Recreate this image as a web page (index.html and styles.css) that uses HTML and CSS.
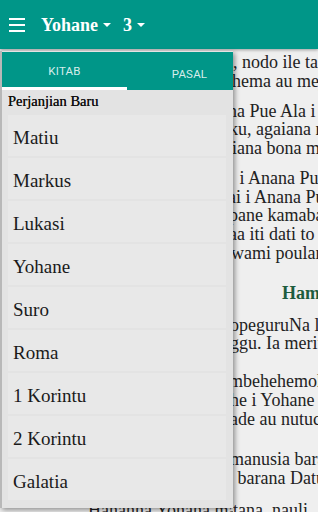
FILE: index.html
```html
<!DOCTYPE html>
<html>
<head>
<meta charset="utf-8">
<link rel="stylesheet" href="styles.css">
</head>
<body>
<header class="appbar">
  <svg class="menu-icon" width="16" height="14" viewBox="0 0 16 14"><rect x="0" y="0" width="16" height="2" fill="#fff"/><rect x="0" y="6" width="16" height="2" fill="#fff"/><rect x="0" y="12" width="16" height="2" fill="#fff"/></svg>
  <div class="picker">Yohane<span class="caret"></span></div>
  <div class="picker">3<span class="caret"></span></div>
</header>

<main class="reader">
  <p>
    <span class="ln"><span class="under c217">Yesu mampaoli pai manguli ia</span>, nodo ile tana ndaposangi</span>
    <span class="ln"><span class="under c216">Ane bara ndatulungi anu kapa</span>hema au mejaa ndaporata</span>
  </p>
  <p>
    <span class="ln"><span class="under c212">Tempo ee natuntu ngkoro, ma</span>na Pue Ala i ewa</span>
    <span class="ln"><span class="under c213">Sabana barempia rapoyaa ini</span>ku, agaiana mpakaroo</span>
    <span class="ln"><span class="under c216">Naumbaika hangko i sira, aga</span>iana bona mawo</span>
  </p>
  <p>
    <span class="ln"><span class="under c219">Sabana hangko i Pue Ala</span> i Anana Pue Ala</span>
    <span class="ln"><span class="under c212">Nuapa nawau iti mewali p</span>ai i Anana Pue Ala</span>
    <span class="ln"><span class="under c213">Hangko iti, ia hai nabaia</span>pane kamabasa</span>
    <span class="ln"><span class="under c213">Sabana hangko i Pue iti, ra</span>aa iti dati to</span>
    <span class="ln"><span class="under c215">Mewali ia to nakahamo nai</span>wami poulana</span>
  </p>
  <h2 class="title">Hampakaroo</h2>
  <p>
    <span class="ln"><span class="under c214">Ane bara manusia ndatuntu t</span>opeguruNa lau</span>
    <span class="ln"><span class="under c214">Hangko i Yohane hai i Yuda</span>ggu. Ia meriu</span>
  </p>
  <p class="gap">
    <span class="ln"><span class="under c213">Rapaantu tauna maroa me</span>mbehehemohe</span>
    <span class="ln"><span class="under c214">Napanangi hai tau ia mae</span>he i Yohane</span>
    <span class="ln"><span class="under c214">Nodo ile, tauna mabaii</span>ade au nutucu</span>
  </p>
  <p class="gap2">
    <span class="ln"><span class="under c214">Yohane manguli: Uma ara</span>manusia bara</span>
    <span class="ln"><span class="under c217">Ane uma ndawai hangko i</span> barana Datu</span>
  </p>
  <p class="last">
    <span class="ln"><span class="under c145">Hananna Yohana mangka</span>tana, nauli.</span>
  </p>
</main>

<nav class="popup">
  <div class="tabs">
    <div class="tab active">KITAB</div>
    <div class="tab">PASAL</div>
  </div>
  <div class="section">Perjanjian Baru</div>
  <ul class="books">
    <li>Matiu</li>
    <li>Markus</li>
    <li>Lukasi</li>
    <li>Yohane</li>
    <li>Suro</li>
    <li>Roma</li>
    <li>1 Korintu</li>
    <li>2 Korintu</li>
    <li>Galatia</li>
  </ul>
</nav>
</body>
</html>
```
FILE: styles.css
```css
* { box-sizing: border-box; }
html, body { margin: 0; padding: 0; }
body {
  width: 318px;
  height: 512px;
  overflow: hidden;
  background: #efefef;
  position: relative;
  font-family: "Liberation Serif", serif;
}
.appbar {
  height: 49px;
  background: #009688;
  display: flex;
  align-items: center;
  padding-left: 9px;
  box-shadow: 0 1px 3px rgba(0,0,0,0.35);
  position: relative;
  z-index: 1;
}
.menu-icon { display: block; margin-right: 16px; }
.picker {
  color: #fff;
  font-family: "Liberation Serif", serif;
  font-weight: bold;
  font-size: 18px;
  display: flex;
  align-items: center;
  margin-right: 12px;
  padding-top: 1px;
}
.caret {
  width: 0; height: 0;
  border-left: 4px solid transparent;
  border-right: 4px solid transparent;
  border-top: 4px solid #fff;
  margin-left: 5px;
  margin-top: -1px;
}
.reader {
  padding: 4px 0 0 16px;
  color: #222;
  font-size: 18px;
  line-height: 18.75px;
  white-space: nowrap;
}
.reader p { margin: 11px 0 0; }
.reader p:first-child { margin-top: 0; }
.ln { display: block; height: 18.75px; }
.under {
  display: inline-block;
  vertical-align: top;
  height: 18.75px;
  overflow: hidden;
}
.c145 { width: 145px; }
.c212 { width: 212px; }
.c213 { width: 213px; }
.c214 { width: 214px; }
.c215 { width: 215px; }
.c216 { width: 216px; }
.c217 { width: 217px; }
.c219 { width: 219px; }
.title {
  margin: 18px 0 0;
  padding-left: 266px;
  font-size: 18px;
  line-height: 24px;
  color: #1d5c3e;
  font-weight: bold;
}
.reader p.gap { margin-top: 19px; }
.reader p.gap2 { margin-top: 22px; }
.reader p.last { margin-top: 13px; padding-left: 72px; }

.popup {
  position: absolute;
  left: 0;
  top: 51px;
  width: 233px;
  height: 457px;
  background: #e3e3e3;
  border-left: 2px solid #b8b8b8;
  box-shadow: 2px 2px 5px rgba(0,0,0,0.4);
  overflow: hidden;
  z-index: 2;
}
.tabs {
  height: 38px;
  margin-top: 1px;
  background: #009688;
  display: flex;
  width: 250px;
}
.tab {
  width: 125px;
  flex: none;
  display: flex;
  align-items: center;
  justify-content: center;
  padding-top: 6px;
  color: rgba(255,255,255,0.85);
  font-family: Roboto, sans-serif;
  font-size: 11.5px;
  letter-spacing: 0.2px;
}
.tab.active { border-bottom: 3px solid #fff; padding-top: 3px; }
.section {
  padding: 0 0 0 6px;
  height: 20px;
  line-height: 20px;
  margin-top: 1px;
  font-size: 14.5px;
  color: #111;
  text-shadow: 0 0 0.4px #111;
}
.books {
  list-style: none;
  margin: 4px 0 0;
  padding: 0;
}
.books li {
  margin: 0 7px 2px 6px;
  height: 41px;
  padding: 5px 0 0 5px;
  line-height: 36px;
  font-size: 19px;
  color: #1a1a1a;
  background: #e8e8e8;
}
```
